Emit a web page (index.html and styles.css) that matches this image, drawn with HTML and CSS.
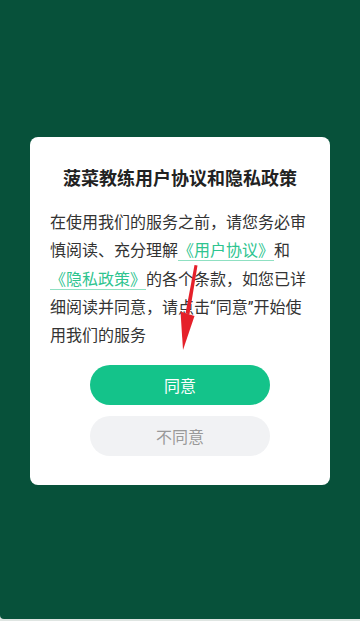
FILE: index.html
```html
<!DOCTYPE html>
<html lang="zh-CN">
<head>
  <meta charset="UTF-8" />
  <meta name="viewport" content="width=device-width, initial-scale=1" />
  <title>用户协议和隐私政策</title>
  <link rel="stylesheet" href="styles.css">
</head>
<body>

  <div class="screen">
    <div class="dialog">
      <h1 class="dialog-title">菠菜教练用户协议和隐私政策</h1>
      <p class="dialog-text">在使用我们的服务之前，请您务必审慎阅读、充分理解<a class="link" href="#">《用户协议》</a>和<a class="link" href="#">《隐私政策》</a>的各个条款，如您已详细阅读并同意，请点击“同意”开始使用我们的服务</p>
      <div class="actions">
        <button class="btn btn-agree">同意</button>
        <button class="btn btn-disagree">不同意</button>
      </div>
    </div>
  </div>
  <div class="bottom-strip"></div>

  <svg class="arrow" width="360" height="621" viewBox="0 0 360 621">
    <polygon points="194.5,265 197.5,265.5 189.5,314 185.5,313.5" fill="#e5202a" />
    <polygon points="180.5,311.5 194.5,316 183,350" fill="#e5202a" />
  </svg>

</body>
</html>
```

FILE: styles.css
```css
body {
  margin: 0;
  background-color: #dfe5e2;
  font-family: Roboto, "Noto Sans CJK SC", sans-serif;
}

.screen {
  height: 619px;
  background-color: #07513a;
  border-bottom-left-radius: 4px;
  display: flex;
  justify-content: center;
  align-items: flex-start;
  padding-top: 137px;
  box-sizing: border-box;
}

.bottom-strip {
  height: 2px;
}

.dialog {
  width: 300px;
  box-sizing: border-box;
  background: #fff;
  border-radius: 8px;
  padding: 29px 20px 29px;
}

.dialog-title {
  margin: 0;
  font-size: 18px;
  line-height: 26px;
  font-weight: 700;
  color: #222;
  text-align: center;
}

.dialog-text {
  margin: 17px 0 0;
  font-size: 16px;
  line-height: 28.3px;
  color: #333;
}

.link {
  color: #2ec48f;
  text-decoration: underline;
  text-decoration-color: #8fe0c2;
  text-underline-offset: 4px;
}

.actions {
  display: flex;
  flex-direction: column;
  align-items: center;
  gap: 11px;
  margin-top: 15px;
}

.btn {
  width: 180px;
  height: 40px;
  border: none;
  border-radius: 20px;
  font-family: inherit;
  font-size: 16px;
  cursor: pointer;
}

.btn-agree {
  background: #14c38a;
  color: #fff;
}

.btn-disagree {
  background: #f1f2f4;
  color: #999;
}

.arrow {
  position: absolute;
  left: 0;
  top: 0;
  pointer-events: none;
}
```
